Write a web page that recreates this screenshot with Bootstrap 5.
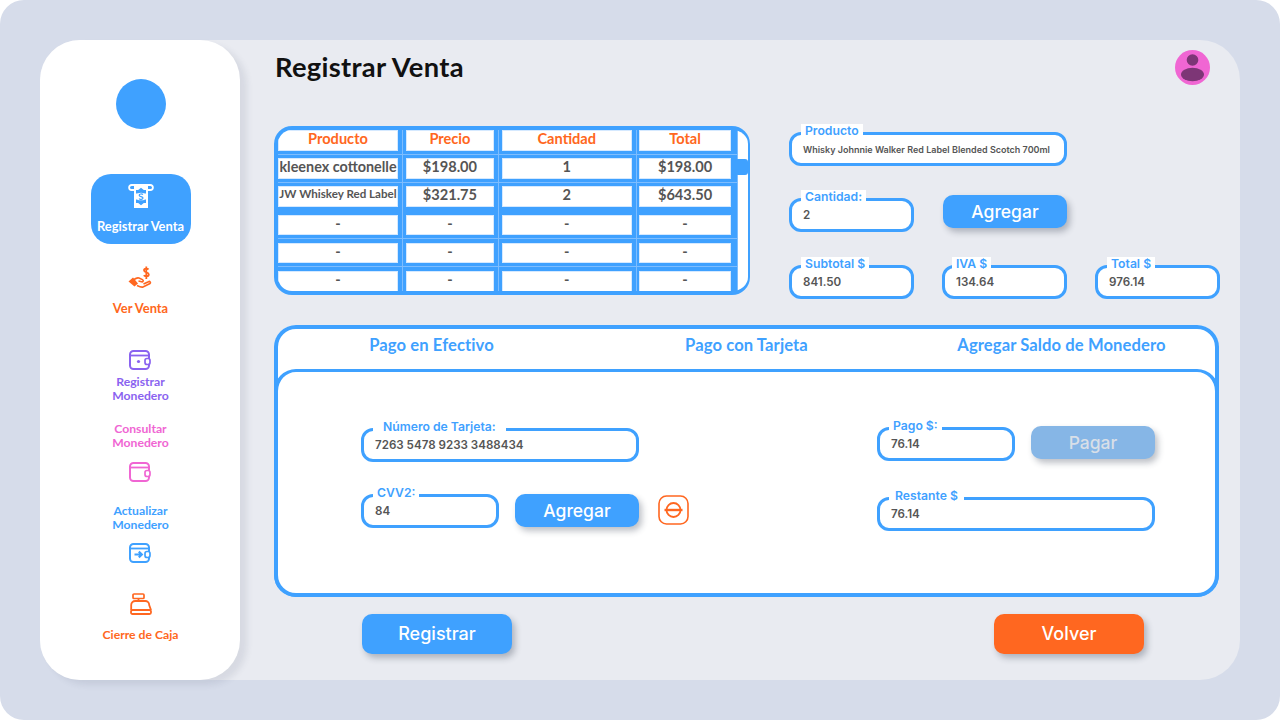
<!DOCTYPE html>
<html lang="es">
<head>
<meta charset="utf-8">
<title>Registrar Venta</title>
<link href="https://cdn.jsdelivr.net/npm/bootstrap@5.3.0/dist/css/bootstrap.min.css" rel="stylesheet">
<style>
:root{--azul:#3fa1ff;--naranja:#ff6720;--morado:#8a63f0;--rosa:#f066d3;--gris:#555;}
html,body{height:720px;overflow:hidden;}
body{background:#fff;font-family:"Lato","Liberation Sans",sans-serif;color:var(--gris);}
.marco{padding:40px;height:720px;background:#d6dcea;border-radius:24px;}
.lienzo{height:640px;background:#e9ebf1;border-radius:40px;}
.lateral{width:200px;height:640px;background:#fff;border-radius:40px;box-shadow:7px 5px 6px rgba(60,70,100,.1);flex:none;padding-left:1px;}
.logo-punto{width:50px;height:50px;border-radius:50%;background:var(--azul);margin-top:39px;margin-bottom:45px;}
.opcion{font-size:12.9px;font-weight:700;line-height:14.5px;text-align:center;text-decoration:none;}
.opcion svg{display:block;margin:0 auto;}
.opcion-activa{width:100px;height:70px;background:var(--azul);color:#fff;border-radius:20px;padding-top:9px;}
.opcion.opcion-activa svg{margin-bottom:10px;}
.c-naranja{color:var(--naranja);}.c-morado{color:var(--morado);}.c-rosa{color:var(--rosa);}.c-azul{color:var(--azul);}
.op-venta{margin-top:22px;}.opcion.op-venta svg{margin-bottom:11px;}
.op-reg,.op-con,.op-act,.op-cie{font-size:12.2px;}
.op-reg{margin-top:34px;}.opcion.op-reg svg{margin-bottom:5px;}
.op-con{margin-top:18px;}.opcion.op-con svg{margin-top:11px;}
.op-act{margin-top:22px;}.opcion.op-act svg{margin-top:10px;}
.op-cie{margin-top:30px;}.opcion.op-cie svg{margin-bottom:13px;}
.contenido{padding:10px 20px 0 34px;width:1000px;}
.cabecera{height:35px;padding-right:10px;margin-left:1px;margin-bottom:41px;}
.titulo-pag{font-size:27.3px;font-weight:700;color:#111;margin:0 0 2px;line-height:33px;letter-spacing:.3px;}
.tabla-caja{width:476px;height:169px;flex:none;border-radius:18px;overflow:hidden;border:4px solid var(--azul);border-right-width:2px;
  background-color:var(--azul);
  background-image:linear-gradient(#7dbdff,#7dbdff),linear-gradient(#7dbdff,#7dbdff),linear-gradient(#7dbdff,#7dbdff),linear-gradient(#7dbdff,#7dbdff),linear-gradient(#7dbdff,#7dbdff),linear-gradient(#7dbdff,#7dbdff),linear-gradient(#7dbdff,#7dbdff);
  background-repeat:no-repeat;
  background-size:1px 100%,1px 100%,1px 100%,100% 1px,100% 1px,100% 1px,100% 1px;
  background-position:124px 0,220px 0,358px 0,0 24px,0 52px,0 108px,0 136px;}
.tabla-rejilla{display:grid;width:453px;grid-template-columns:120px 88.7px 129.7px 91.8px;column-gap:7.6px;grid-auto-rows:20.6px;row-gap:7.6px;flex:none;}
.celda{background:#fff;box-shadow:inset 0 0 0 1px #d5e9ff;font-size:14.6px;font-weight:700;line-height:18px;text-align:center;white-space:nowrap;color:var(--gris);}
.celda-cab{color:var(--naranja);}
.celda-menor{font-size:11.6px;line-height:16px;}
.celda-justa{font-size:14.4px;}
.celda-vacia{line-height:17px;}
.barra{width:10px;margin-left:7px;background:#fff;box-shadow:-1px 0 0 #7dbdff;position:relative;flex:none;}
.barra-mando{position:absolute;left:-3px;right:0;top:29px;height:16px;background:var(--azul);border-radius:3px;}
.derecha{width:431px;margin-left:39px;padding-top:6px;}
.campo{position:relative;height:34px;border:3px solid var(--azul);border-radius:12px;background:#fff;font-family:"Inter","Liberation Sans",sans-serif;font-size:11.6px;font-weight:600;color:var(--gris);padding:1px 11px 0;display:flex;align-items:center;white-space:nowrap;}
.campo-chico{font-size:9px;}
.rotulo{position:absolute;top:-11px;left:9px;background:#fff;color:var(--azul);font-size:12.2px;font-weight:600;line-height:13px;padding:0 4px;font-family:"Inter","Liberation Sans",sans-serif;white-space:nowrap;}
.rotulo-iva{left:7px;}
.rotulo-largo{padding:0 10px;}
.rotulo-medio{padding:0 6px;}
.ancho-125{width:125px;}.ancho-278{width:278px;}.ancho-138{width:138px;}
.boton{font-family:"Inter","Liberation Sans",sans-serif;font-weight:500;color:#fff;background:var(--azul);border:0;border-radius:10px;box-shadow:3px 4px 6px rgba(40,50,70,.3);padding:0;}
.boton:hover,.boton:focus{background:var(--azul);color:#fff;}
.boton-ag{width:124px;height:33px;font-size:17.5px;line-height:33px;}
.boton-arriba{margin-top:-3px;}
.boton.boton-off,.boton.boton-off:disabled{background:#86b6e6;color:#d8dfe8;opacity:1;border:0;box-shadow:3px 4px 6px rgba(40,50,70,.3);margin-top:-1px;}
.boton-gde{width:150px;height:40px;font-size:18px;line-height:40px;}
.boton.boton-nar,.boton.boton-nar:hover,.boton.boton-nar:focus{background:var(--naranja);color:#fff;}
.fila-cant{margin-top:32px;gap:29px;}
.fila-tot{margin-top:33px;}
.pago{width:945px;height:272px;margin-top:26px;background:#fff;border-radius:22px;box-shadow:inset 0 0 0 4px var(--azul);}
.pestanas{height:44px;display:grid;grid-template-columns:repeat(3,1fr);}
.pestana{font-size:16.6px;letter-spacing:.1px;font-weight:700;color:var(--azul);text-align:center;line-height:40px;text-decoration:none;}
.panel-pago{height:228px;border:4px solid var(--azul);border-top-width:3px;border-radius:22px;background:#fff;padding:56px 60px 0 83px;}
.fila-cvv{margin-top:32px;}
.boton-cvv{margin-left:16px;}
.icono-cvv{margin:1px 0 0 19px;}
.col-pagar{margin-top:-1px;}
.campo-resto{margin-top:36px;}
.pie{padding:17px 76px 0 88px;}
.avatar{flex:none;}
</style>
</head>
<body>
<div class="marco">
  <div class="lienzo d-flex">
    <nav class="lateral d-flex flex-column align-items-center">
      <div class="logo-punto"></div>
      <a class="opcion opcion-activa" href="#">
        <svg width="26" height="26" viewBox="0 0 26 26"><path d="M6 7H3.6a2.4 2.4 0 0 1 0-5h18.8a2.4 2.4 0 0 1 0 5H20" fill="none" stroke="#fff" stroke-width="1.8"/><rect x="6" y="2" width="14" height="23" fill="#fff"/><path d="M8 7h2.2L13 4.8 15.8 7H18v3.5c-1.5 0-2-.8-5-.8s-3.5.8-5 .8zM8 20h2.2L13 22.2 15.8 20H18v-3.5c-1.5 0-2 .8-5 .8s-3.5-.8-5-.8z" fill="#3fa1ff"/><path d="M15 11.5c-1-.8-3.8-.8-3.8.8 0 1.800 3.800 1 3.800 2.800 0 1.500-3 1.500-4 .5" fill="none" stroke="#3fa1ff" stroke-width="1.2"/></svg>
        Registrar Venta
      </a>
      <a class="opcion op-venta c-naranja" href="#">
        <svg width="24" height="24" viewBox="0 0 24 24"><path d="M20.5 3.5c-.8-1.200-4.500-1.400-4.500.8 0 2.700 4.800 1.500 4.800 4.200 0 2.300-4 2.200-5 .8M18.300 .5v12.500" fill="none" stroke="#ff6720" stroke-width="1.8"/><path d="M.5 15.500 5 11.500l5 6-3.500 3z" fill="#ff6720"/><path d="M6 13.500c2-1.500 3.500-2 5-1.500l3.500 1.600c1.500.8.500 2.600-1 2.200l-3-.8M9 19.500c3 1.500 4.500 2 6 1.500l7-3.500c1.200-1-.2-2.600-1.500-1.800L15.500 18" fill="none" stroke="#ff6720" stroke-width="1.6"/></svg>
        Ver Venta
      </a>
      <a class="opcion op-reg c-morado" href="#">
        <svg width="22" height="20" viewBox="0 0 22 20"><rect x="1" y="1" width="19" height="18" rx="3.5" fill="none" stroke="#8a63f0" stroke-width="2"/><path d="M1 5.500h19" stroke="#8a63f0" stroke-width="1.8"/><rect x="16" y="8.500" width="5" height="6" rx="2" fill="#fff" stroke="#8a63f0" stroke-width="1.7"/><circle cx="9.500" cy="11.500" r="1.600" fill="#8a63f0"/></svg>
        Registrar<br>Monedero
      </a>
      <a class="opcion op-con c-rosa" href="#">
        Consultar<br>Monedero
        <svg width="22" height="20" viewBox="0 0 22 20"><rect x="1" y="1" width="19" height="18" rx="3.5" fill="none" stroke="#f066d3" stroke-width="2"/><path d="M1 5.500h19" stroke="#f066d3" stroke-width="1.8"/><rect x="16" y="8.500" width="5" height="6" rx="2" fill="#fff" stroke="#f066d3" stroke-width="1.7"/></svg>
      </a>
      <a class="opcion op-act c-azul" href="#">
        Actualizar<br>Monedero
        <svg width="22" height="20" viewBox="0 0 22 20"><rect x="1" y="1" width="19" height="18" rx="3.5" fill="none" stroke="#3fa1ff" stroke-width="2"/><path d="M1 5.500h19" stroke="#3fa1ff" stroke-width="1.8"/><rect x="16" y="8.500" width="5" height="6" rx="2" fill="#fff" stroke="#3fa1ff" stroke-width="1.7"/><path d="M5.500 11.500h7M9.800 8.600l3 2.900-3 2.900" fill="none" stroke="#3fa1ff" stroke-width="2.2"/></svg>
      </a>
      <a class="opcion op-cie c-naranja" href="#">
        <svg width="22" height="22" viewBox="0 0 22 22"><rect x="3" y="1" width="11" height="4.500" rx="1" fill="none" stroke="#ff6720" stroke-width="1.7"/><path d="M8.500 5.500v2.500M1.200 17V12a4 4 0 0 1 4-4h10a4 4 0 0 1 4 4L21 17" fill="none" stroke="#ff6720" stroke-width="1.8"/><rect x="1" y="17" width="20" height="4" rx="1.5" fill="none" stroke="#ff6720" stroke-width="1.8"/></svg>
        Cierre de Caja
      </a>
    </nav>

    <main class="contenido">
      <header class="cabecera d-flex justify-content-between align-items-center">
        <h1 class="titulo-pag">Registrar Venta</h1>
        <svg class="avatar" width="35" height="35" viewBox="0 0 35 35"><circle cx="17.5" cy="17.5" r="17.5" fill="#f066d3"/><circle cx="17.5" cy="10" r="5.800" fill="#7d3676"/><ellipse cx="17.5" cy="24.500" rx="11.500" ry="6.800" fill="#7d3676"/></svg>
      </header>

      <section class="d-flex">
        <div class="tabla-caja d-flex">
          <div class="tabla-rejilla">
            <div class="celda celda-cab">Producto</div><div class="celda celda-cab">Precio</div><div class="celda celda-cab">Cantidad</div><div class="celda celda-cab">Total</div>
            <div class="celda celda-justa">kleenex cottonelle</div><div class="celda">$198.00</div><div class="celda">1</div><div class="celda">$198.00</div>
            <div class="celda celda-menor">JW Whiskey Red Label</div><div class="celda">$321.75</div><div class="celda">2</div><div class="celda">$643.50</div>
            <div class="celda celda-vacia">-</div><div class="celda celda-vacia">-</div><div class="celda celda-vacia">-</div><div class="celda celda-vacia">-</div>
            <div class="celda celda-vacia">-</div><div class="celda celda-vacia">-</div><div class="celda celda-vacia">-</div><div class="celda celda-vacia">-</div>
            <div class="celda celda-vacia">-</div><div class="celda celda-vacia">-</div><div class="celda celda-vacia">-</div><div class="celda celda-vacia">-</div>
          </div>
          <div class="barra"><div class="barra-mando"></div></div>
        </div>

        <div class="derecha d-flex flex-column">
          <div class="campo campo-chico ancho-278"><span class="rotulo">Producto</span>Whisky Johnnie Walker Red Label Blended Scotch 700ml</div>
          <div class="d-flex fila-cant">
            <div class="campo ancho-125"><span class="rotulo">Cantidad:</span>2</div>
            <button class="btn boton boton-ag boton-arriba" type="button">Agregar</button>
          </div>
          <div class="d-flex justify-content-between fila-tot">
            <div class="campo ancho-125"><span class="rotulo">Subtotal $</span>841.50</div>
            <div class="campo ancho-125"><span class="rotulo rotulo-iva">IVA $</span>134.64</div>
            <div class="campo ancho-125"><span class="rotulo">Total $</span>976.14</div>
          </div>
        </div>
      </section>

      <section class="pago">
        <div class="pestanas">
          <a class="pestana" href="#">Pago en Efectivo</a>
          <a class="pestana" href="#">Pago con Tarjeta</a>
          <a class="pestana" href="#">Agregar Saldo de Monedero</a>
        </div>
        <div class="panel-pago d-flex justify-content-between">
          <div>
            <div class="campo ancho-278"><span class="rotulo rotulo-largo">Número de Tarjeta:</span>7263 5478 9233 3488434</div>
            <div class="d-flex align-items-start fila-cvv">
              <div class="campo ancho-138"><span class="rotulo">CVV2:</span>84</div>
              <button class="btn boton boton-ag boton-cvv" type="button">Agregar</button>
              <svg class="icono-cvv" width="31" height="30" viewBox="0 0 31 30"><rect x="1" y="1" width="29" height="28" rx="7.5" fill="none" stroke="#ff6720" stroke-width="1.6"/><circle cx="15.5" cy="15" r="7" fill="none" stroke="#ff6720" stroke-width="1.8"/><path d="M6.5 15h18" stroke="#ff6720" stroke-width="2.4"/></svg>
            </div>
          </div>
          <div class="ancho-278 col-pagar">
            <div class="d-flex justify-content-between">
              <div class="campo ancho-138"><span class="rotulo">Pago $:</span>76.14</div>
              <button class="btn boton boton-ag boton-off" type="button" disabled>Pagar</button>
            </div>
            <div class="campo ancho-278 campo-resto"><span class="rotulo rotulo-medio">Restante $</span>76.14</div>
          </div>
        </div>
      </section>

      <footer class="pie d-flex justify-content-between">
        <button class="btn boton boton-gde" type="button">Registrar</button>
        <button class="btn boton boton-gde boton-nar" type="button">Volver</button>
      </footer>
    </main>
  </div>
</div>
<script src="https://cdn.jsdelivr.net/npm/bootstrap@5.3.0/dist/js/bootstrap.bundle.min.js"></script>
</body>
</html>
